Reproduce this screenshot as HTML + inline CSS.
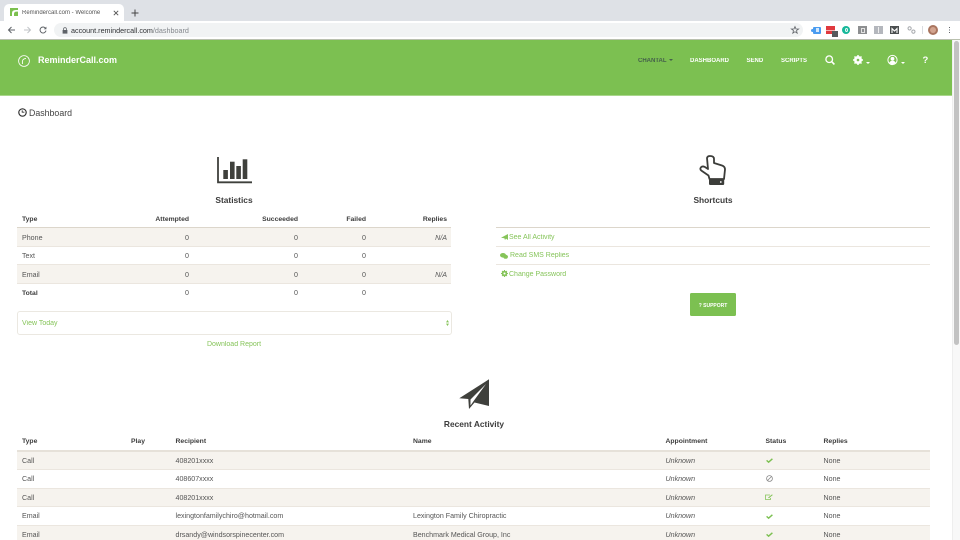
<!DOCTYPE html>
<html lang="en">
<head>
<meta charset="utf-8">
<title>Remindercall.com - Welcome</title>
<style>
html,body{margin:0;padding:0;width:960px;height:540px;overflow:hidden;background:#fff;font-family:"Liberation Sans",sans-serif;}
.a{position:absolute;}
.t{position:absolute;white-space:nowrap;font-size:7.1px;line-height:10px;height:10px;color:#555;margin-top:1.5px;filter:blur(.2px);}
.b{font-weight:bold;color:#3c3c3c;font-size:6.8px;}
.r{text-align:right;}
.i{font-style:italic;}
.g{color:#86c45a;font-size:7px;}
.l{position:absolute;height:1px;}
svg{position:absolute;overflow:visible;}
</style>
</head>
<body>
<!-- browser chrome -->
<div class="a" style="left:0;top:0;width:960px;height:21px;background:#dee1e6;"></div>
<div class="a" style="left:4px;top:4px;width:120px;height:17px;background:#fff;border-radius:5px 5px 0 0;"></div>
<div class="a" style="left:0;top:21px;width:960px;height:18px;background:#fff;"></div>
<div class="a" style="left:0;top:39px;width:960px;height:1px;background:#b9c0ae;"></div>
<svg style="left:10px;top:8px" width="8" height="8" viewBox="0 0 8 8"><rect width="8" height="8" fill="#7cc04f"/><path d="M2 8V5Q2 2 6 2H8V3.6H6.4Q4 3.6 4 6V8Z" fill="#fff"/></svg>
<span class="t" style="left:22px;top:6.5px;font-size:6px;color:#555;">Remindercall.com - Welcome</span>
<svg style="left:113px;top:10px" width="6" height="6" viewBox="0 0 6 6"><path d="M.8.8 5.2 5.2M5.2.8.8 5.2" stroke="#555" stroke-width=".9"/></svg>
<svg style="left:131px;top:9px" width="8" height="8" viewBox="0 0 8 8"><path d="M4 .5V7.5M.5 4H7.5" stroke="#444" stroke-width="1"/></svg>
<svg style="left:7px;top:26px" width="9" height="8" viewBox="0 0 9 8"><path d="M8 4H1.5M4.5 1 1.5 4 4.5 7" stroke="#5f6368" stroke-width="1" fill="none"/></svg>
<svg style="left:23px;top:26px" width="9" height="8" viewBox="0 0 9 8"><path d="M1 4H7.5M4.5 1 7.5 4 4.5 7" stroke="#c0c3c7" stroke-width="1" fill="none"/></svg>
<svg style="left:39px;top:26px" width="8" height="8" viewBox="0 0 8 8"><path d="M6.6 2.4A3 3 0 1 0 7 4.6" stroke="#5f6368" stroke-width="1" fill="none"/><path d="M7.4.6V3.2H4.8Z" fill="#5f6368"/></svg>
<div class="a" style="left:54px;top:23px;width:749px;height:14px;background:#f1f3f4;border-radius:7px;"></div>
<svg style="left:61.5px;top:26.5px" width="6" height="7" viewBox="0 0 6 7"><path d="M1.6 3V2A1.4 1.4 0 0 1 4.4 2V3" stroke="#5f6368" stroke-width=".8" fill="none"/><rect x=".6" y="3" width="4.8" height="3.6" fill="#5f6368"/></svg>
<span class="t" style="left:71px;top:24px;font-size:7.2px;color:#303235;">account.remindercall.com<span style="color:#84888d;">/dashboard</span></span>
<svg style="left:790.5px;top:26px" width="8" height="8" viewBox="0 0 8 8"><path d="M4 .6 5 3H7.6L5.5 4.6 6.2 7.2 4 5.7 1.8 7.2 2.5 4.6.4 3H3Z" fill="none" stroke="#5f6368" stroke-width=".8"/></svg>
<!-- extensions -->
<div class="a" style="left:813px;top:26.5px;width:8px;height:7px;background:#4a9cf0;border-radius:1px;"></div>
<div class="a" style="left:811px;top:28.5px;width:3px;height:3px;background:#4a9cf0;border-radius:50%;"></div>
<div class="a" style="left:816px;top:28px;width:3px;height:4px;background:#d5e8fb;"></div>
<div class="a" style="left:826px;top:26px;width:9px;height:8px;background:#e0393e;"></div>
<div class="a" style="left:826px;top:29.5px;width:9px;height:1px;background:#f4b6b6;"></div>
<div class="a" style="left:832px;top:31px;width:6px;height:6px;background:#55595c;"></div>
<div class="a" style="left:842px;top:26px;width:8px;height:8px;background:#16b89a;border-radius:50%;"></div>
<div class="a" style="left:844.5px;top:28px;width:3px;height:4px;border:1px solid #e8faf6;border-radius:50%;box-sizing:border-box;"></div>
<div class="a" style="left:858px;top:26px;width:9px;height:8px;background:#8d8f91;"></div>
<div class="a" style="left:860.5px;top:27.5px;width:4px;height:5px;border:1px solid #e2e2e2;box-sizing:border-box;"></div>
<div class="a" style="left:874px;top:26px;width:9px;height:8px;background:#b4b7bd;"></div>
<div class="a" style="left:878px;top:27px;width:1px;height:6px;background:#eee;"></div>
<div class="a" style="left:890px;top:26px;width:9px;height:8px;background:#4b4f50;"></div>
<svg style="left:891px;top:27.5px" width="7" height="5" viewBox="0 0 7 5"><path d="M1 5V.6L3.5 3 6 .6V5" stroke="#fff" stroke-width="1.1" fill="none"/></svg>
<svg style="left:907px;top:26px" width="9" height="8" viewBox="0 0 9 8"><circle cx="2.6" cy="2.4" r="1.6" fill="none" stroke="#a5a8ac" stroke-width="1"/><circle cx="6.4" cy="5.6" r="1.6" fill="none" stroke="#a5a8ac" stroke-width="1"/></svg>
<div class="a" style="left:921.5px;top:26px;width:1px;height:8px;background:#dadce0;"></div>
<div class="a" style="left:928px;top:25px;width:10px;height:10px;border-radius:50%;background:#a9755f;"></div>
<div class="a" style="left:930px;top:27px;width:6px;height:6px;border-radius:50%;background:#d3a48f;"></div>
<div class="a" style="left:948.5px;top:27px;width:1.4px;height:1.4px;background:#5f6368;box-shadow:0 2.5px 0 #5f6368,0 5px 0 #5f6368;"></div>

<!-- navbar -->
<div class="a" style="left:0;top:40px;width:952px;height:55px;background:#7cc051;"></div>
<div class="a" style="left:0;top:95px;width:952px;height:1px;background:#a9d68b;"></div>
<svg style="left:18px;top:55px" width="12" height="12" viewBox="0 0 12 12"><circle cx="6" cy="6" r="5.4" fill="none" stroke="#fff" stroke-width=".8"/><path d="M4.4 9V6.6Q4.4 3.8 8 3.4" fill="none" stroke="#fff" stroke-width=".9"/></svg>
<span class="t" style="left:38px;top:53.5px;font-size:9px;font-weight:bold;color:#fff;">ReminderCall.com</span>
<span class="t" style="left:638px;top:54.5px;font-size:6px;font-weight:bold;color:#45604b;">CHANTAL</span>
<svg style="left:668.5px;top:59px" width="4" height="2" viewBox="0 0 4 2"><path d="M0 0H4L2 2Z" fill="#45604b"/></svg>
<span class="t" style="left:690px;top:54.5px;font-size:6px;font-weight:bold;color:#fff;">DASHBOARD</span>
<span class="t" style="left:746.5px;top:54.5px;font-size:6px;font-weight:bold;color:#fff;">SEND</span>
<span class="t" style="left:781px;top:54.5px;font-size:6px;font-weight:bold;color:#fff;">SCRIPTS</span>
<svg style="left:825px;top:55px" width="10" height="10" viewBox="0 0 10 10"><circle cx="4.2" cy="4.2" r="3.3" fill="none" stroke="#fff" stroke-width="1.3"/><path d="M6.6 6.6 9.4 9.4" stroke="#fff" stroke-width="1.6"/></svg>
<svg style="left:853px;top:55px" width="10" height="10" viewBox="0 0 10 10"><circle cx="5" cy="5" r="3" fill="none" stroke="#fff" stroke-width="2"/><path d="M5 0V10M0 5H10M1.5 1.5 8.5 8.5M8.5 1.5 1.5 8.5" stroke="#fff" stroke-width="1.5"/><circle cx="5" cy="5" r="1.3" fill="#7cc051"/></svg>
<svg style="left:866px;top:62px" width="4" height="2" viewBox="0 0 4 2"><path d="M0 0H4L2 2Z" fill="#fff"/></svg>
<svg style="left:887px;top:55px" width="11" height="10" viewBox="0 0 11 10"><circle cx="5.5" cy="5" r="4.6" fill="none" stroke="#fff" stroke-width="1"/><circle cx="5.5" cy="3.8" r="1.9" fill="#fff"/><path d="M2.4 8Q3 5.8 5.5 5.8T8.6 8L5.5 9.6Z" fill="#fff"/></svg>
<svg style="left:900.5px;top:61.5px" width="4" height="2" viewBox="0 0 4 2"><path d="M0 0H4L2 2Z" fill="#fff"/></svg>
<span class="t" style="left:922.5px;top:54.5px;font-size:9.5px;font-weight:bold;color:#fff;">?</span>

<!-- scrollbar -->
<div class="a" style="left:952px;top:40px;width:8px;height:500px;background:#f8f8f8;border-left:1px solid #eee;box-sizing:border-box;"></div>
<div class="a" style="left:954px;top:41px;width:5px;height:304px;background:#c2c2c2;border-radius:3px;"></div>

<!-- heading -->
<svg style="left:17.5px;top:108px" width="9" height="9" viewBox="0 0 9 9"><circle cx="4.5" cy="4.5" r="3.7" fill="none" stroke="#333" stroke-width="1.2"/><path d="M6.4 4.2H4.2V2.4" fill="none" stroke="#333" stroke-width=".9"/></svg>
<span class="t" style="left:29px;top:106.5px;font-size:8.8px;color:#444;">Dashboard</span>

<!-- statistics -->
<svg style="left:217px;top:157px" width="35" height="27" viewBox="0 0 35 27">
<path d="M1 0V25.3H35" fill="none" stroke="#3f403c" stroke-width="1.8"/>
<rect x="6.3" y="13" width="4.6" height="9" fill="#3f403c"/><rect x="13" y="4.7" width="4.6" height="17.3" fill="#3f403c"/><rect x="19.3" y="9" width="4.6" height="13" fill="#3f403c"/><rect x="25.7" y="2.3" width="4.6" height="19.7" fill="#3f403c"/>
</svg>
<span class="t" style="left:134px;width:200px;text-align:center;top:193px;font-size:8.4px;font-weight:bold;color:#3c3c3c;">Statistics</span>

<span class="t b" style="left:22px;top:213px;">Type</span>
<span class="t b r" style="left:89px;width:100px;top:213px;">Attempted</span>
<span class="t b r" style="left:198px;width:100px;top:213px;">Succeeded</span>
<span class="t b r" style="left:266px;width:100px;top:213px;">Failed</span>
<span class="t b r" style="left:347px;width:100px;top:213px;">Replies</span>

<div class="a" style="left:17px;top:227px;width:434px;height:19px;background:#f6f3ee;"></div>
<div class="a" style="left:17px;top:264.5px;width:434px;height:19px;background:#f6f3ee;"></div>
<div class="l" style="left:17px;top:227px;width:434px;background:#dcd6cb;"></div>
<div class="l" style="left:17px;top:246px;width:434px;background:#ebe6df;"></div>
<div class="l" style="left:17px;top:264px;width:434px;background:#ebe6df;"></div>
<div class="l" style="left:17px;top:283px;width:434px;background:#ebe6df;"></div>

<span class="t" style="left:22px;top:231px;">Phone</span>
<span class="t r" style="left:89px;width:100px;top:231px;">0</span>
<span class="t r" style="left:198px;width:100px;top:231px;">0</span>
<span class="t r" style="left:266px;width:100px;top:231px;">0</span>
<span class="t r i" style="left:347px;width:100px;top:231px;">N/A</span>

<span class="t" style="left:22px;top:249.5px;">Text</span>
<span class="t r" style="left:89px;width:100px;top:249.5px;">0</span>
<span class="t r" style="left:198px;width:100px;top:249.5px;">0</span>
<span class="t r" style="left:266px;width:100px;top:249.5px;">0</span>

<span class="t" style="left:22px;top:268px;">Email</span>
<span class="t r" style="left:89px;width:100px;top:268px;">0</span>
<span class="t r" style="left:198px;width:100px;top:268px;">0</span>
<span class="t r" style="left:266px;width:100px;top:268px;">0</span>
<span class="t r i" style="left:347px;width:100px;top:268px;">N/A</span>

<span class="t b" style="left:22px;top:287px;">Total</span>
<span class="t r" style="left:89px;width:100px;top:286px;">0</span>
<span class="t r" style="left:198px;width:100px;top:286px;">0</span>
<span class="t r" style="left:266px;width:100px;top:286px;">0</span>

<div class="a" style="left:17px;top:311px;width:435px;height:24px;box-sizing:border-box;border:1px solid #ebe8e1;border-radius:3px;"></div>
<span class="t g" style="left:22px;top:317px;">View Today</span>
<svg style="left:446px;top:320px" width="3" height="6" viewBox="0 0 3 6"><path d="M0 2.4 1.5 0 3 2.4ZM0 3.6H3L1.5 6Z" fill="#86c45a"/></svg>
<span class="t g" style="left:134px;width:200px;text-align:center;top:338.5px;">Download Report</span>

<!-- shortcuts -->
<svg style="left:699px;top:155px" width="28" height="31" viewBox="0 0 28 31">
<path d="M8 3Q8.5 1 11 1 15 1 15 4V8L23 10.5Q26 11.5 26 14.5L25 24H10.5L9.5 20.5 2.4 15.6Q.5 14 2 12.3 3.5 10.8 5.5 11.8L9 14Z" fill="#fff" stroke="#3c3d3a" stroke-width="1.8" stroke-linejoin="round"/>
<path d="M10 23.5H25.2V29Q25.2 30 24 30H11.4Q10 30 10 28.6Z" fill="#3c3d3a"/>
<circle cx="21.8" cy="27" r=".9" fill="#fff"/>
</svg>
<span class="t" style="left:613px;width:200px;text-align:center;top:193px;font-size:8.4px;font-weight:bold;color:#3c3c3c;">Shortcuts</span>

<div class="l" style="left:496px;top:227px;width:434px;background:#dcd6cb;"></div>
<div class="l" style="left:496px;top:246px;width:434px;background:#ebe6df;"></div>
<div class="l" style="left:496px;top:264px;width:434px;background:#ebe6df;"></div>

<svg style="left:500.5px;top:234px" width="7" height="6" viewBox="0 0 7 6"><path d="M0 3.8 7 0V6L5 4.6 4 6 3.4 4.2Z" fill="#86c45a"/></svg>
<span class="t g" style="left:509px;top:231px;">See All Activity</span>
<svg style="left:500px;top:252.5px" width="8" height="6" viewBox="0 0 8 6"><ellipse cx="3" cy="2.3" rx="3" ry="2.3" fill="#86c45a"/><ellipse cx="5.6" cy="3.8" rx="2.4" ry="2" fill="#86c45a"/></svg>
<span class="t g" style="left:510px;top:249.5px;">Read SMS Replies</span>
<svg style="left:500.5px;top:270px" width="7" height="7" viewBox="0 0 10 10"><circle cx="5" cy="5" r="3" fill="none" stroke="#86c45a" stroke-width="2"/><path d="M5 0V10M0 5H10M1.5 1.5 8.5 8.5M8.5 1.5 1.5 8.5" stroke="#86c45a" stroke-width="1.5"/><circle cx="5" cy="5" r="1.5" fill="#fff"/></svg>
<span class="t g" style="left:509px;top:268px;">Change Password</span>

<div class="a" style="left:690px;top:293px;width:46px;height:23px;background:#7cc051;border-radius:1.5px;"></div>
<span class="t" style="left:690px;width:46px;text-align:center;top:299px;font-size:5px;font-weight:bold;color:#fff;">? SUPPORT</span>

<!-- recent activity -->
<svg style="left:459px;top:379px" width="31" height="31" viewBox="0 0 31 31">
<path d="M30 .3 .3 19.3 9.3 20 10 30 15.5 23.5 30 27Z" fill="#3f403c"/>
<path d="M27 5 11.5 20.5V26.5L15 21.5Z" fill="#fff"/>
</svg>
<span class="t" style="left:374px;width:200px;text-align:center;top:417px;font-size:8.4px;font-weight:bold;color:#3c3c3c;">Recent Activity</span>

<span class="t b" style="left:22px;top:435.5px;">Type</span>
<span class="t b" style="left:131px;top:435.5px;">Play</span>
<span class="t b" style="left:175.5px;top:435.5px;">Recipient</span>
<span class="t b" style="left:413px;top:435.5px;">Name</span>
<span class="t b" style="left:665.5px;top:435.5px;">Appointment</span>
<span class="t b" style="left:765.5px;top:435.5px;">Status</span>
<span class="t b" style="left:823.5px;top:435.5px;">Replies</span>

<div class="a" style="left:17px;top:451px;width:913px;height:18.5px;background:#f6f3ee;"></div>
<div class="a" style="left:17px;top:488.5px;width:913px;height:18px;background:#f6f3ee;"></div>
<div class="a" style="left:17px;top:525.5px;width:913px;height:14.5px;background:#f6f3ee;"></div>
<div class="l" style="left:17px;top:450px;width:913px;height:1.5px;background:#e6e1d9;"></div>
<div class="l" style="left:17px;top:469px;width:913px;background:#ebe6df;"></div>
<div class="l" style="left:17px;top:488px;width:913px;background:#ebe6df;"></div>
<div class="l" style="left:17px;top:506px;width:913px;background:#ebe6df;"></div>
<div class="l" style="left:17px;top:525px;width:913px;background:#ebe6df;"></div>

<span class="t" style="left:22px;top:454px;">Call</span>
<span class="t" style="left:175.5px;top:454px;">408201xxxx</span>
<span class="t i" style="left:665.5px;top:454px;">Unknown</span>
<svg style="left:766px;top:458px" width="7" height="5" viewBox="0 0 7 5"><path d="M.6 2.4 2.6 4.2 6.4.8" fill="none" stroke="#7cc051" stroke-width="1.4"/></svg>
<span class="t" style="left:823.5px;top:454px;">None</span>

<span class="t" style="left:22px;top:472.5px;">Call</span>
<span class="t" style="left:175.5px;top:472.5px;">408607xxxx</span>
<span class="t i" style="left:665.5px;top:472.5px;">Unknown</span>
<svg style="left:766px;top:475px" width="7" height="7" viewBox="0 0 7 7"><circle cx="3.5" cy="3.5" r="2.9" fill="none" stroke="#8a8a8a" stroke-width=".8"/><path d="M1.5 5.5 5.5 1.5" stroke="#8a8a8a" stroke-width=".8"/></svg>
<span class="t" style="left:823.5px;top:472.5px;">None</span>

<span class="t" style="left:22px;top:491px;">Call</span>
<span class="t" style="left:175.5px;top:491px;">408201xxxx</span>
<span class="t i" style="left:665.5px;top:491px;">Unknown</span>
<svg style="left:765px;top:494px" width="8" height="6" viewBox="0 0 8 6"><path d="M5.5 4V5.5H.5V1H5" fill="none" stroke="#86c45a" stroke-width=".8"/><path d="M3 3.6 7 .4 7.8 1 4 4.2Z" fill="#86c45a"/></svg>
<span class="t" style="left:823.5px;top:491px;">None</span>

<span class="t" style="left:22px;top:509.5px;">Email</span>
<span class="t" style="left:175.5px;top:509.5px;">lexingtonfamilychiro@hotmail.com</span>
<span class="t" style="left:413px;top:509.5px;">Lexington Family Chiropractic</span>
<span class="t i" style="left:665.5px;top:509.5px;">Unknown</span>
<svg style="left:766px;top:513.5px" width="7" height="5" viewBox="0 0 7 5"><path d="M.6 2.4 2.6 4.2 6.4.8" fill="none" stroke="#7cc051" stroke-width="1.4"/></svg>
<span class="t" style="left:823.5px;top:509.5px;">None</span>

<span class="t" style="left:22px;top:528px;">Email</span>
<span class="t" style="left:175.5px;top:528px;">drsandy@windsorspinecenter.com</span>
<span class="t" style="left:413px;top:528px;">Benchmark Medical Group, Inc</span>
<span class="t i" style="left:665.5px;top:528px;">Unknown</span>
<svg style="left:766px;top:532px" width="7" height="5" viewBox="0 0 7 5"><path d="M.6 2.4 2.6 4.2 6.4.8" fill="none" stroke="#7cc051" stroke-width="1.4"/></svg>
<span class="t" style="left:823.5px;top:528px;">None</span>
</body>
</html>
